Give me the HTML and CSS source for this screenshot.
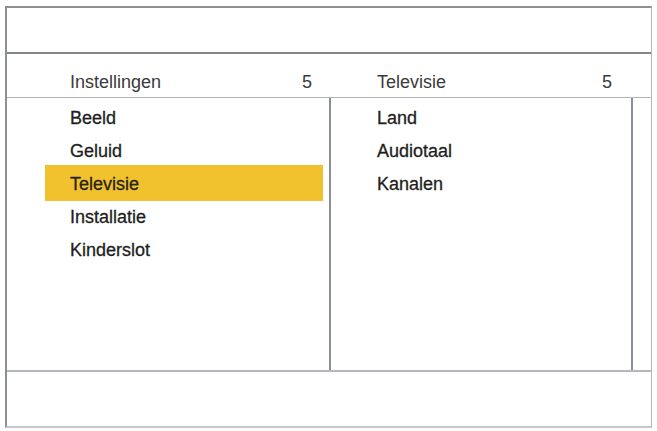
FILE: index.html
```html
<!DOCTYPE html>
<html>
<head>
<meta charset="utf-8">
<link rel="stylesheet" href="styles.css">
</head>
<body>
<div class="frame">
  <div class="topbar"></div>
  <div class="heads">
    <div class="head head-left"><span>Instellingen</span><span>5</span></div>
    <div class="head head-mid"><span>Televisie</span><span>5</span></div>
  </div>
  <div class="cols">
    <ul class="col col-left">
      <li class="item">Beeld</li>
      <li class="item">Geluid</li>
      <li class="item selected">Televisie</li>
      <li class="item">Installatie</li>
      <li class="item">Kinderslot</li>
    </ul>
    <ul class="col col-mid">
      <li class="item">Land</li>
      <li class="item">Audiotaal</li>
      <li class="item">Kanalen</li>
    </ul>
    <div class="col col-right"></div>
  </div>
  <div class="footer"></div>
</div>
</body>
</html>
```

FILE: styles.css
```css
html, body {
  margin: 0;
  padding: 0;
  background: #ffffff;
}
body {
  font-family: "Liberation Sans", Arial, sans-serif;
  color: #222;
}
.frame {
  margin: 6px 0 0 5px;
  width: 647px;
  height: 422px;
  box-sizing: border-box;
  border-left: 2px solid #8c8f94;
  border-top: 2px solid #8c8f94;
  border-right: 1px solid #b4b7bb;
  border-bottom: 2px solid #c4c6c9;
  display: flex;
  flex-direction: column;
}
.topbar {
  height: 44px;
  border-bottom: 2px solid #83878c;
}
.heads {
  height: 43px;
  display: flex;
  border-bottom: 1px solid #b0b3b8;
}
.head {
  display: flex;
  justify-content: space-between;
  align-items: flex-end;
  font-size: 18px;
  line-height: 20px;
  color: #3a3a3a;
  padding-bottom: 5px;
  box-sizing: border-box;
}
.head-left {
  width: 322px;
  padding-left: 63px;
  padding-right: 17px;
}
.head-mid {
  width: 302px;
  padding-left: 48px;
  padding-right: 19px;
}
.cols {
  flex: 1;
  display: flex;
  border-bottom: 2px solid #b4b7bb;
}
.col {
  margin: 0;
  padding: 4px 0 0 0;
  list-style: none;
}
.col-left {
  width: 322px;
  border-right: 2px solid #8a8e95;
}
.col-mid {
  width: 300px;
  border-right: 2px solid #8a8e95;
}
.col-right {
  flex: 1;
}
.item {
  height: 33px;
  line-height: 33px;
  font-size: 18px;
  color: #1e1e1e;
  -webkit-text-stroke: 0.3px #1e1e1e;
}
.col-left .item {
  margin-left: 38px;
  margin-right: 6px;
  padding-left: 25px;
}
.col-mid .item {
  padding-left: 46px;
}
.item.selected {
  margin-top: -3px;
  height: 36px;
  padding-top: 3px;
  box-sizing: border-box;
  background: #f2c22e;
  color: #2a2410;
}
.footer {
  height: 54px;
}
```
